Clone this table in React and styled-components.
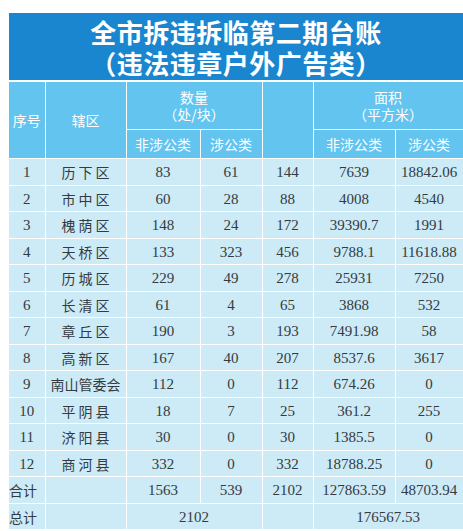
import React from "react";
import styled, { createGlobalStyle } from "styled-components";

const GlobalStyle = createGlobalStyle`
  html, body {
    margin: 0;
    padding: 0;
    background: #ffffff;
    overflow: hidden;
  }
`;

const rows = [
  ["1", "历下区", "83", "61", "144", "7639", "18842.06"],
  ["2", "市中区", "60", "28", "88", "4008", "4540"],
  ["3", "槐荫区", "148", "24", "172", "39390.7", "1991"],
  ["4", "天桥区", "133", "323", "456", "9788.1", "11618.88"],
  ["5", "历城区", "229", "49", "278", "25931", "7250"],
  ["6", "长清区", "61", "4", "65", "3868", "532"],
  ["7", "章丘区", "190", "3", "193", "7491.98", "58"],
  ["8", "高新区", "167", "40", "207", "8537.6", "3617"],
  ["9", "南山管委会", "112", "0", "112", "674.26", "0"],
  ["10", "平阴县", "18", "7", "25", "361.2", "255"],
  ["11", "济阳县", "30", "0", "30", "1385.5", "0"],
  ["12", "商河县", "332", "0", "332", "18788.25", "0"],
];

const App = () => (
  <Page>
    <GlobalStyle />
    <Board>
      <TitleBand>
        <TitleLine>全市拆违拆临第二期台账</TitleLine>
        <TitleLine>（违法违章户外广告类）</TitleLine>
      </TitleBand>
      <Table>
        <colgroup>
          <col style={{ width: 36 }} />
          <col style={{ width: 81 }} />
          <col style={{ width: 74 }} />
          <col style={{ width: 62 }} />
          <col style={{ width: 51 }} />
          <col style={{ width: 82 }} />
          <col style={{ width: 68 }} />
        </colgroup>
        <thead>
          <HeadRow tall>
            <Th rowSpan={2}>序号</Th>
            <Th rowSpan={2}>辖区</Th>
            <Th colSpan={2}>
              <HeadLine>数量</HeadLine>
              <HeadLine>（处/块）</HeadLine>
            </Th>
            <Th rowSpan={2} />
            <Th colSpan={2}>
              <HeadLine>面积</HeadLine>
              <HeadLine>（平方米）</HeadLine>
            </Th>
          </HeadRow>
          <HeadRow>
            <Th>非涉公类</Th>
            <Th>涉公类</Th>
            <Th>非涉公类</Th>
            <Th>涉公类</Th>
          </HeadRow>
        </thead>
        <tbody>
          {rows.map((r) => (
            <Row key={r[0]}>
              <Num>{r[0]}</Num>
              <District spaced={r[1].length === 3}>{r[1]}</District>
              {r.slice(2).map((v, i) => (
                <Num key={i}>{v}</Num>
              ))}
            </Row>
          ))}
          <Row>
            <Label>合计</Label>
            <Num />
            <Num>1563</Num>
            <Num>539</Num>
            <Num>2102</Num>
            <Num>127863.59</Num>
            <Num>48703.94</Num>
          </Row>
          <Row>
            <Label>总计</Label>
            <Num />
            <Num colSpan={2}>2102</Num>
            <Num />
            <Num colSpan={2}>176567.53</Num>
          </Row>
        </tbody>
      </Table>
    </Board>
  </Page>
);

const Page = styled.div`
  padding: 13px 0 0 9px;
`;

const Board = styled.div`
  width: 454px;
`;

const TitleBand = styled.div`
  background: #1a86cf;
  height: 68px;
  display: flex;
  flex-direction: column;
  align-items: center;
  justify-content: center;
  border-bottom: 1px solid #ffffff;
  box-sizing: border-box;
`;

const TitleLine = styled.div`
  color: #ffffff;
  font-family: "Noto Sans CJK SC", sans-serif;
  font-weight: 700;
  font-size: 26px;
  line-height: 32px;
  height: 31px;
  letter-spacing: 0.5px;
`;

const Table = styled.table`
  width: 454px;
  border-collapse: collapse;
  table-layout: fixed;
`;

const HeadRow = styled.tr`
  height: ${(p) => (p.tall ? "48px" : "29px")};
  background: #63c4ef;
`;

const Th = styled.th`
  border: 1px solid #ffffff;
  padding: 0;
  color: #ffffff;
  font-family: "Noto Sans CJK SC", sans-serif;
  font-weight: 400;
  font-size: 14px;
  line-height: 17px;
  text-align: center;
  white-space: nowrap;
  &:first-child {
    border-left: none;
  }
`;

const HeadLine = styled.div`
  line-height: 17px;
  height: 17px;
`;

const Row = styled.tr`
  height: 26.5px;
  background: #cdeaf7;
`;

const Num = styled.td`
  border: 1px solid #ffffff;
  padding: 2px 0 0;
  color: #333b40;
  font-family: "Liberation Serif", serif;
  font-size: 15px;
  text-align: center;
  white-space: nowrap;
  &:first-child {
    border-left: none;
  }
`;

const District = styled.td`
  border: 1px solid #ffffff;
  padding: 1px 0 0;
  color: #333b40;
  font-family: "Noto Sans CJK SC", sans-serif;
  font-size: 14px;
  letter-spacing: ${(p) => (p.spaced ? "3px" : "0")};
  text-indent: ${(p) => (p.spaced ? "3px" : "0")};
  text-align: center;
  white-space: nowrap;
`;

const Label = styled.td`
  border: 1px solid #ffffff;
  border-left: none;
  padding: 1px 0 0;
  color: #333b40;
  font-family: "Noto Sans CJK SC", sans-serif;
  font-size: 14px;
  text-align: left;
  white-space: nowrap;
`;

export default App;
